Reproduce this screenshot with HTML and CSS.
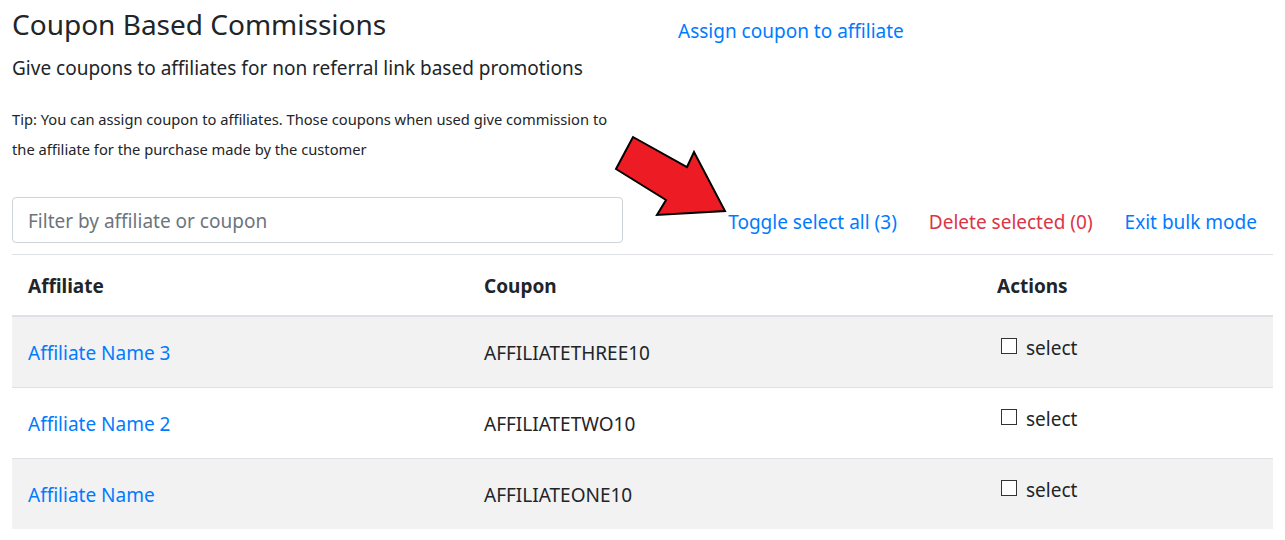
FILE: index.html
```html
<!DOCTYPE html>
<html lang="en">
<head>
<meta charset="utf-8">
<title>Coupon Based Commissions</title>
<link rel="stylesheet" href="styles.css">
</head>
<body>
<div class="page">
  <div class="top">
    <div class="intro">
      <h3 class="title">Coupon Based Commissions</h3>
      <h5 class="subtitle">Give coupons to affiliates for non referral link based promotions</h5>
      <p class="tip">Tip: You can assign coupon to affiliates. Those coupons when used give commission to the affiliate for the purchase made by the customer</p>
    </div>
    <a class="link assign" href="#">Assign coupon to affiliate</a>
  </div>

  <div class="toolbar">
    <input class="filter" type="text" placeholder="Filter by affiliate or coupon">
    <div class="bulk-actions">
      <a class="link" href="#">Toggle select all (3)</a>
      <a class="link danger" href="#">Delete selected (0)</a>
      <a class="link" href="#">Exit bulk mode</a>
    </div>
  </div>

  <table class="coupons">
    <colgroup>
      <col class="col-affiliate">
      <col class="col-coupon">
      <col class="col-actions">
    </colgroup>
    <thead>
      <tr><th>Affiliate</th><th>Coupon</th><th>Actions</th></tr>
    </thead>
    <tbody>
      <tr class="striped">
        <td><a class="link" href="#">Affiliate Name 3</a></td>
        <td>AFFILIATETHREE10</td>
        <td class="actions"><label class="select"><input type="checkbox" class="box"><span>select</span></label></td>
      </tr>
      <tr>
        <td><a class="link" href="#">Affiliate Name 2</a></td>
        <td>AFFILIATETWO10</td>
        <td class="actions"><label class="select"><input type="checkbox" class="box"><span>select</span></label></td>
      </tr>
      <tr class="striped">
        <td><a class="link" href="#">Affiliate Name</a></td>
        <td>AFFILIATEONE10</td>
        <td class="actions"><label class="select"><input type="checkbox" class="box"><span>select</span></label></td>
      </tr>
    </tbody>
  </table>

  <svg class="arrow" width="120" height="90" viewBox="0 0 120 90" aria-hidden="true">
    <polygon points="21,4 75,34 82,19 113,78 45,82 54,67 4,36" fill="#ed1c24" stroke="#000" stroke-width="2" stroke-linejoin="miter"/>
  </svg>
</div>
</body>
</html>
```

FILE: styles.css
```css
* { box-sizing: border-box; }

html, body {
  margin: 0;
  padding: 0;
  background: #fff;
}

body {
  font-family: "Noto Sans", "Open Sans", sans-serif;
  font-size: 19px;
  line-height: 1.2;
  color: #212529;
}

.page {
  position: relative;
  padding: 0 12px;
}

.link {
  color: #007bff;
  text-decoration: none;
}

.link.danger {
  color: #dc3545;
}

.top {
  display: flex;
  align-items: flex-start;
}

.intro {
  width: 611px;
}

.title {
  margin: 8px 0 0;
  font-size: 28px;
  font-weight: 400;
  line-height: 1.2;
}

.subtitle {
  margin: 15px 0 0;
  font-size: 19px;
  font-weight: 400;
  line-height: 1.2;
}

.tip {
  margin: 25px 0 0;
  font-size: 14.7px;
  line-height: 30px;
}

.assign {
  margin: 20px 0 0 55px;
}

.toolbar {
  display: flex;
  align-items: center;
  margin-top: 33px;
}

.filter {
  width: 611px;
  height: 46px;
  border: 1px solid #ced4da;
  border-radius: 4px;
  padding: 2px 15px 0;
  font-family: inherit;
  font-size: 19px;
  color: #495057;
  background: #fff;
  outline: none;
}

.filter::placeholder {
  color: #6c757d;
}

.bulk-actions {
  flex: 1;
  display: flex;
  justify-content: flex-end;
  gap: 32px;
  padding: 4px 16px 0 0;
}

.coupons {
  width: 100%;
  margin-top: 11px;
  border-collapse: separate;
  border-spacing: 0;
  table-layout: fixed;
}

.col-affiliate { width: 456px; }
.col-coupon { width: 513px; }

.coupons th {
  text-align: left;
  font-weight: 700;
  padding: 20px 16px 17px;
  border-top: 1px solid #dee2e6;
  border-bottom: 2px solid #dee2e6;
}

.coupons td {
  padding: 25px 16px 22px;
  line-height: 23px;
  border-top: 1px solid #dee2e6;
  vertical-align: top;
}

.coupons tbody tr:first-child td {
  border-top: 0;
}

.coupons tr.striped td {
  background: #f2f2f2;
}

.coupons td.actions {
  padding-top: 20px;
  padding-bottom: 27px;
}

.select {
  display: flex;
  align-items: flex-start;
  gap: 9px;
  padding-left: 4px;
}

.box {
  -webkit-appearance: none;
  appearance: none;
  width: 16px;
  height: 16px;
  margin: 1px 0 0;
  border: 1px solid #333;
  background: #fff;
  border-radius: 0;
}

.arrow {
  position: absolute;
  left: 612px;
  top: 133px;
}
```
